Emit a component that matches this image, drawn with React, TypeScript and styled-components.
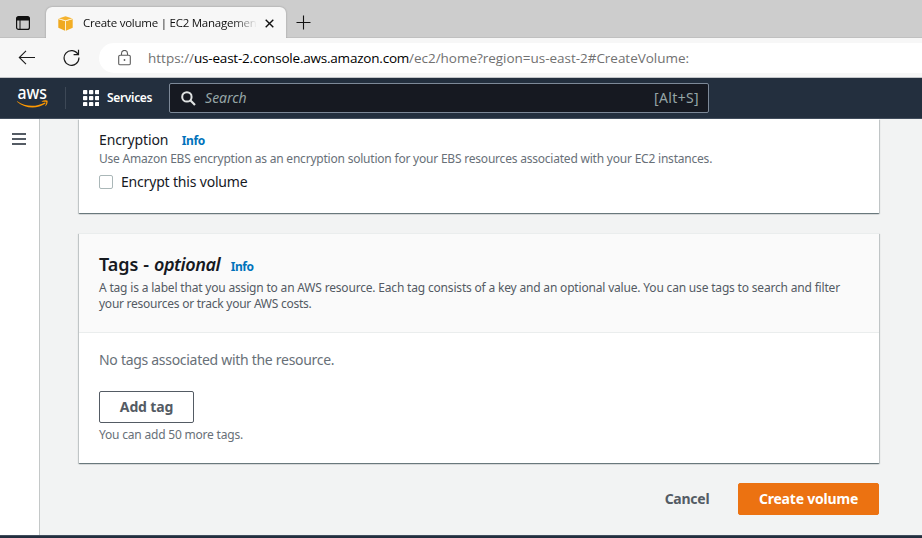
import React from "react";
import styled, { createGlobalStyle, css } from "styled-components";

const GlobalStyle = createGlobalStyle`
  *, *::before, *::after { box-sizing: border-box; }
  html, body { margin: 0; padding: 0; }
  body {
    font-family: "Noto Sans", "Open Sans", sans-serif;
    font-size: 14px;
    color: #16191f;
    background: #f2f3f3;
    overflow: hidden;
  }
  button { font-family: inherit; margin: 0; }
  svg { display: block; flex: none; }
`;

/* Letter spacing in px, tuned per string. */
const tracking = css<{ $track?: number }>`
  letter-spacing: ${({ $track = 0 }) => $track}px;
  white-space: nowrap;
`;

const Window = styled.div`
  width: 922px;
  height: 538px;
  display: flex;
  flex-direction: column;
  overflow: hidden;
`;

/* ---------- Browser chrome ---------- */

const TabStrip = styled.div`
  height: 38px;
  flex: none;
  display: flex;
  align-items: flex-end;
  background: #cdcdcd;
  box-shadow: inset 0 -1px 0 #c0c0c0;
`;

const TabActions = styled.div`
  width: 46px;
  height: 31px;
  padding: 9px 0 0 16px;
`;

const Tab = styled.div`
  width: 240px;
  height: 31px;
  display: flex;
  align-items: center;
  padding: 1px 0 0 12px;
  background: #f7f7f7;
  border-radius: 6px 6px 0 0;
  box-shadow: 0 0 2px rgba(0, 0, 0, 0.3);
  clip-path: inset(-4px -4px 0 -4px);
`;

const TabTitle = styled.span`
  width: 173px;
  margin-left: 10px;
  overflow: hidden;
  font: 11.5px/18px "Open Sans", sans-serif;
  color: #111;
  ${tracking}
  mask-image: linear-gradient(90deg, #000 150px, transparent 174px);
`;

const TabClose = styled.div`
  margin-left: 9px;
`;

const NewTab = styled.div`
  height: 31px;
  padding: 8px 0 0 10px;
`;

const AddressRow = styled.div`
  height: 40px;
  flex: none;
  display: flex;
  align-items: center;
  padding-left: 18px;
  background: #f7f7f7;
  border-bottom: 1px solid #c4c6c9;
`;

const ReloadSlot = styled.div`
  margin: 0 19px 0 27px;
`;

const AddressBar = styled.div`
  flex: 1;
  height: 30px;
  display: flex;
  align-items: center;
  padding-left: 19px;
  background: #fff;
  border-radius: 15px 0 0 15px;
`;

const Url = styled.div`
  display: flex;
  margin-left: 17px;
  font: 13.5px/20px "Open Sans", sans-serif;
  color: #717171;
`;

const UrlPart = styled.span<{ $track?: number; $host?: boolean }>`
  color: ${({ $host }) => ($host ? "#000" : "inherit")};
  ${tracking}
`;

/* ---------- Console navigation ---------- */

const NavBar = styled.header`
  height: 41px;
  flex: none;
  display: flex;
  align-items: center;
  padding-left: 17px;
  background: #232f3e;
  border-bottom: 1px solid #414d5c;
`;

const NavDivider = styled.div`
  width: 1px;
  height: 22px;
  margin: 0 17px;
  background: #3d4856;
`;

const Services = styled.span`
  margin: 0 17px 0 8px;
  font-size: 12px;
  font-weight: 600;
  line-height: 18px;
  color: #fff;
  ${tracking}
`;

const SearchBox = styled.div`
  width: 540px;
  height: 30px;
  display: flex;
  align-items: center;
  padding: 0 9px 0 11px;
  background: #161921;
  border: 1px solid #7d8998;
  border-radius: 2px;
`;

const Placeholder = styled.span`
  margin-left: 9px;
  padding-bottom: 2px;
  flex: 1;
  font-style: italic;
  color: #95a5a6;
  ${tracking}
`;

const Shortcut = styled.span`
  padding-bottom: 2px;
  color: #95a5a6;
  ${tracking}
`;

/* ---------- Page body ---------- */

const Body = styled.div`
  flex: 1;
  min-height: 0;
  display: flex;
`;

const SideRail = styled.aside`
  width: 40px;
  flex: none;
  padding: 14px 0 0 12px;
  background: #fff;
  border-right: 1px solid #c4c8c8;
`;

const Content = styled.main`
  width: 839px;
  padding-left: 39px;
  display: flex;
  flex-direction: column;
`;

const Card = styled.section`
  background: #fff;
  box-shadow: 0 1px 1px 0 rgba(0, 28, 36, 0.4), 1px 1px 1px 0 rgba(0, 28, 36, 0.15),
    -1px 1px 1px 0 rgba(0, 28, 36, 0.15);
`;

const EncryptionCard = styled(Card)`
  height: 94px;
  flex: none;
  padding: 11px 20px 0;
  clip-path: inset(0 -4px -4px -4px);
`;

const TagsCard = styled(Card)`
  height: 230px;
  flex: none;
  margin-top: 20px;
  border-top: 1px solid #eaeded;
`;

const TagsHeader = styled.div`
  height: 99px;
  padding: 17px 20px 0;
  background: #fafafa;
  border-bottom: 1px solid #eaeded;
`;

const TagsBody = styled.div`
  padding: 17px 20px 0;
`;

const LabelRow = styled.div<{ $below: number }>`
  display: flex;
  align-items: baseline;
  margin-bottom: ${({ $below }) => $below}px;
`;

const FieldLabel = styled.span`
  line-height: 20px;
  ${tracking}
`;

const InfoLink = styled.a<{ $gap: number }>`
  margin-left: ${({ $gap }) => $gap}px;
  font-size: 12px;
  font-weight: 700;
  line-height: 16px;
  letter-spacing: -0.4px;
  color: #0073bb;
`;

const Hint = styled.div<{ $track?: number; $dark?: boolean }>`
  font-size: 12px;
  line-height: 16px;
  color: ${({ $dark }) => ($dark ? "#545b64" : "#687078")};
  ${tracking}
`;

const CheckRow = styled.label`
  display: flex;
  align-items: center;
  height: 22px;
  margin-top: 4px;
  gap: 8px;
`;

const CheckBox = styled.span`
  width: 14px;
  height: 14px;
  background: #fff;
  border: 1px solid #aab7b8;
  border-radius: 2px;
`;

const Title = styled.h2`
  margin: 0;
  font-size: 18px;
  font-weight: 600;
  line-height: 26px;
  ${tracking}
`;

const Optional = styled.em<{ $track?: number }>`
  margin-left: 5px;
  ${tracking}
`;

const EmptyText = styled.p`
  margin: 0 0 21px;
  line-height: 20px;
  color: #687078;
  ${tracking}
`;

const Button = styled.button<{ $kind: "normal" | "link" | "primary"; $width: number; $track?: number }>`
  display: block;
  width: ${({ $width }) => $width}px;
  height: 32px;
  padding: 0;
  font-size: 14px;
  font-weight: 700;
  line-height: 20px;
  border-radius: 2px;
  text-align: center;
  ${tracking}
  ${({ $kind }) =>
    $kind === "primary"
      ? "background: #ec7211; border: 1px solid #ec7211; color: #fff;"
      : $kind === "normal"
      ? "background: #fff; border: 1px solid #545b64; color: #545b64;"
      : "background: transparent; border: 1px solid transparent; color: #545b64;"}
`;

const TagLimit = styled(Hint)`
  margin-top: 4px;
`;

const Actions = styled.div`
  display: flex;
  justify-content: flex-end;
  gap: 8px;
  margin-top: 20px;
`;

const FooterBar = styled.footer`
  height: 3px;
  flex: none;
  background: #232f3e;
  border-top: 1px solid #414d5c;
`;

/* ---------- Icons ---------- */

const TabActionsIcon = () => (
  <svg width="14" height="14" viewBox="0 0 14 14">
    <rect x="0.6" y="0.6" width="12.8" height="12.8" rx="2" fill="none" stroke="#111" strokeWidth="1.2" />
    <path d="M0.5 4.5V2.5a2 2 0 0 1 2-2h9a2 2 0 0 1 2 2v2z" fill="#111" />
    <path d="M4 4v9.5" stroke="#111" strokeWidth="1" />
  </svg>
);

const CubeIcon = () => (
  <svg width="15" height="15" viewBox="0 0 15 15">
    <path d="M0.5 2.4 7.5 0.3l7 2.1-7 2.1z" fill="#f5b32f" />
    <path d="M0.3 3.1 7.1 5v9.7L0.3 11.8z" fill="#efa91f" />
    <path d="M14.7 3.1 7.9 5v9.7l6.8-2.9z" fill="#f3ae25" />
    <path d="M0.4 2.7 7.5 4.8l7.1-2.1M7.5 4.8v9.8" fill="none" stroke="#fff1d0" strokeWidth="0.8" />
  </svg>
);

const CloseIcon = () => (
  <svg width="9" height="9" viewBox="0 0 9 9">
    <path d="M0.7 0.7l7.6 7.6M8.3 0.7L0.7 8.3" stroke="#111" strokeWidth="1.4" />
  </svg>
);

const PlusIcon = () => (
  <svg width="15" height="15" viewBox="0 0 15 15">
    <path d="M7.5 0.5v14M0.5 7.5h14" stroke="#111" strokeWidth="1.1" />
  </svg>
);

const BackIcon = () => (
  <svg width="18" height="16" viewBox="0 0 18 16">
    <path d="M17 7.5H1.5M8 0.8L1.3 7.5 8 14.2" fill="none" stroke="#1b1b1b" strokeWidth="1.1" />
  </svg>
);

const ReloadIcon = () => (
  <svg width="17" height="17" viewBox="0 0 17 17">
    <path d="M15.1 5.6A7.4 7.4 0 1 0 15.9 8.5M15.5 0.8v4.9h-4.9" fill="none" stroke="#1b1b1b" strokeWidth="1.2" />
  </svg>
);

const LockIcon = () => (
  <svg width="13" height="16" viewBox="0 0 13 16">
    <rect x="0.7" y="5.2" width="11.6" height="9.6" rx="1.4" fill="none" stroke="#5c5c5c" strokeWidth="1.1" />
    <path d="M3.5 5V3.4a3 3 0 0 1 6 0V5" fill="none" stroke="#5c5c5c" strokeWidth="1.1" />
    <circle cx="6.5" cy="10" r="0.9" fill="#5c5c5c" />
  </svg>
);

const AwsLogo = () => (
  <svg width="31" height="24" viewBox="0 0 31 24" overflow="visible">
    <text
      x="0.5"
      y="12.5"
      textLength="29.5"
      lengthAdjust="spacingAndGlyphs"
      fontFamily="Noto Sans, sans-serif"
      fontSize="17.5"
      fontWeight="500"
      fill="#fff"
    >
      aws
    </text>
    <path d="M0.2 15.2c8 5.8 19 6 27.2 1.5.9-.5 1.6.5.8 1.1C20 23.3 7.5 22.6 0 15.7c-.3-.3-.1-.7.2-.5z" fill="#f90" />
    <path d="M24.8 15.2c1.9-1.2 5.2-1 5.7-.4.5.7-.1 4-1.8 5.3-.3.2-.6.1-.4-.3.5-1.1 1.2-3.3.9-3.8-.4-.5-2.8-.3-4-.2-.5 0-.6-.3-.4-.6z" fill="#f90" />
  </svg>
);

const gridCells = [0, 6, 12];

const GridIcon = () => (
  <svg width="16" height="16" viewBox="0 0 16 16">
    {gridCells.map((y) =>
      gridCells.map((x) => <rect key={`${x}-${y}`} x={x} y={y} width="4.3" height="4.3" rx="0.8" fill="#fff" />)
    )}
  </svg>
);

const SearchIcon = () => (
  <svg width="15" height="15" viewBox="0 0 15 15">
    <circle cx="5.9" cy="5.9" r="4.7" fill="none" stroke="#e0e3e3" strokeWidth="2" />
    <path d="M9.3 9.3l4.7 4.7" stroke="#e0e3e3" strokeWidth="2.2" />
  </svg>
);

const MenuIcon = () => (
  <svg width="14" height="12" viewBox="0 0 14 12">
    <path d="M0 1h14M0 6h14M0 11h14" stroke="#545b64" strokeWidth="2" />
  </svg>
);

export default function App() {
  return (
    <Window>
      <GlobalStyle />
      <TabStrip>
        <TabActions>
          <TabActionsIcon />
        </TabActions>
        <Tab>
          <CubeIcon />
          <TabTitle $track={-0.24}>Create volume | EC2 Management</TabTitle>
          <TabClose>
            <CloseIcon />
          </TabClose>
        </Tab>
        <NewTab>
          <PlusIcon />
        </NewTab>
      </TabStrip>
      <AddressRow>
        <BackIcon />
        <ReloadSlot>
          <ReloadIcon />
        </ReloadSlot>
        <AddressBar>
          <LockIcon />
          <Url>
            <UrlPart>https://</UrlPart>
            <UrlPart $host $track={-0.21}>us-east-2.console.aws.amazon.com</UrlPart>
            <UrlPart $track={-0.03}>/ec2/home?region=us-east-2#CreateVolume:</UrlPart>
          </Url>
        </AddressBar>
      </AddressRow>

      <NavBar>
        <AwsLogo />
        <NavDivider />
        <GridIcon />
        <Services $track={-0.33}>Services</Services>
        <SearchBox>
          <SearchIcon />
          <Placeholder $track={-0.05}>Search</Placeholder>
          <Shortcut $track={0.38}>[Alt+S]</Shortcut>
        </SearchBox>
      </NavBar>

      <Body>
        <SideRail>
          <MenuIcon />
        </SideRail>
        <Content>
          <EncryptionCard>
            <LabelRow $below={1}>
              <FieldLabel $track={-0.12}>Encryption</FieldLabel>
              <InfoLink $gap={13.5}>Info</InfoLink>
            </LabelRow>
            <Hint $track={-0.212}>
              Use Amazon EBS encryption as an encryption solution for your EBS resources associated with your EC2 instances.
            </Hint>
            <CheckRow>
              <CheckBox />
              <FieldLabel $track={-0.18}>Encrypt this volume</FieldLabel>
            </CheckRow>
          </EncryptionCard>

          <TagsCard>
            <TagsHeader>
              <LabelRow $below={3}>
                <Title>
                  Tags -<Optional $track={-0.42}>optional</Optional>
                </Title>
                <InfoLink $gap={10.5}>Info</InfoLink>
              </LabelRow>
              <Hint $dark $track={-0.182}>
                A tag is a label that you assign to an AWS resource. Each tag consists of a key and an optional value. You can use tags to search and filter
              </Hint>
              <Hint $dark $track={-0.25}>your resources or track your AWS costs.</Hint>
            </TagsHeader>
            <TagsBody>
              <EmptyText $track={-0.29}>No tags associated with the resource.</EmptyText>
              <Button $kind="normal" $width={95} $track={-0.15}>
                Add tag
              </Button>
              <TagLimit $track={-0.2}>You can add 50 more tags.</TagLimit>
            </TagsBody>
          </TagsCard>

          <Actions>
            <Button $kind="link" $width={86} $track={-0.25}>
              Cancel
            </Button>
            <Button $kind="primary" $width={141} $track={-0.2}>
              Create volume
            </Button>
          </Actions>
        </Content>
      </Body>
      <FooterBar />
    </Window>
  );
}
